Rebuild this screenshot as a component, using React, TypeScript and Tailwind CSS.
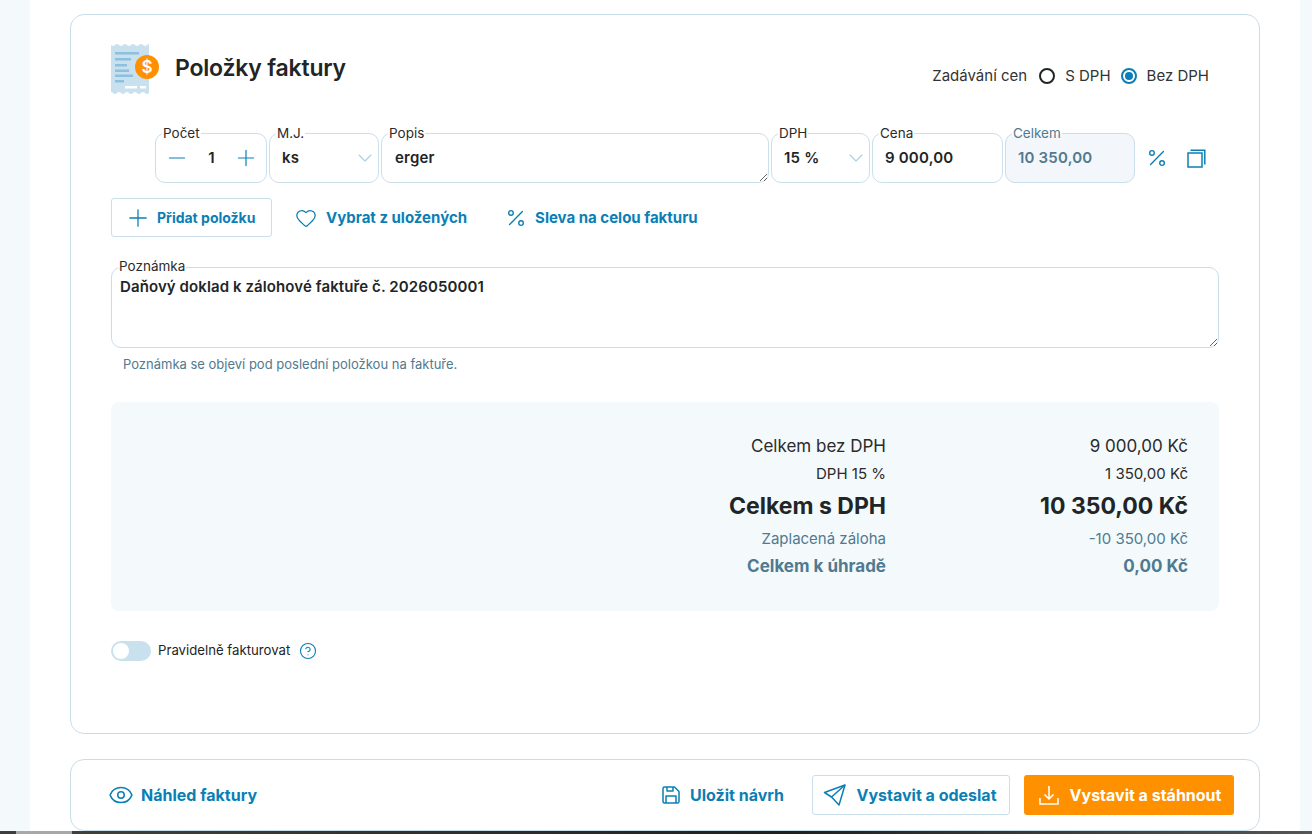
import React from 'react';
import { ChevronDown, CircleHelp, Eye, Heart, Minus, Percent, Plus } from 'lucide-react';

const ReceiptIcon: React.FC = () => (
  <svg width="50" height="52" viewBox="0 0 50 52" className="shrink-0">
    <path
      d="M0 1 q2 2 4 0 t4 0 t4 0 t4 0 t4 0 t4 0 t4 0 t4 0 t4 0 t2 0 V49 q-2 2 -4 0 t-4 0 t-4 0 t-4 0 t-4 0 t-4 0 t-4 0 t-4 0 t-4 0 t-2 0 Z"
      fill="#c9e0ee"
    />
    <g fill="#8dc0de">
      <rect x="4" y="8" width="24" height="2.5" />
      <rect x="4" y="14" width="16" height="2.5" />
      <rect x="4" y="20" width="12" height="2.5" />
      <rect x="4" y="25.5" width="14" height="2.5" />
      <rect x="4" y="30.5" width="18" height="2.5" />
      <rect x="4" y="36" width="9" height="2.5" />
    </g>
    <rect x="14" y="42" width="12" height="2.5" fill="#fff" />
    <rect x="29" y="42" width="6" height="2.5" fill="#fff" />
    <circle cx="36" cy="23" r="12" fill="#ff9100" />
    <text x="36" y="29" textAnchor="middle" fontSize="17" fontWeight="600" fontFamily="Inter, sans-serif" fill="#fff">$</text>
  </svg>
);

const PercentIcon: React.FC = () => (
  <Percent size={22} strokeWidth={1.5} className="text-[#0b7fb5]" />
);

const Field: React.FC<{
  label: string;
  width: string;
  muted?: boolean;
  children: React.ReactNode;
}> = ({ label, width, muted, children }) => (
  <div
    className={`relative h-[50px] rounded-[10px] border border-[#c9dfeb] flex items-center ${width} ${muted ? 'bg-[#f3f6fa]' : 'bg-white'}`}
  >
    <span
      className={`absolute left-[6px] -top-[10px] px-[1px] text-[13.5px] font-normal tracking-normal leading-[18px] bg-gradient-to-b from-white from-60% to-transparent to-60% ${muted ? 'text-[#4f7a90]' : 'text-[#2b2b2b]'}`}
    >
      {label}
    </span>
    {children}
  </div>
);

const SummaryRow: React.FC<{ label: string; value: string; className: string }> = ({ label, value, className }) => (
  <div className={`flex justify-end ${className}`}>
    <span>{label}</span>
    <span className="w-[302px] text-right">{value}</span>
  </div>
);

const App: React.FC = () => {
  return (
    <div className="h-[834px] w-[1312px] overflow-hidden flex flex-col bg-[#f4f9fc] font-['Inter',sans-serif] text-[#222526]">
      <div className="h-[831px] shrink-0 ml-[30px] mr-[12px] bg-white pl-[40px] pr-[40px] pt-[14px]">
        <section className="h-[720px] w-[1190px] rounded-[14px] border border-[#c9dde9] pl-[40px] pr-[40px] pt-[29px]">
          <div className="flex justify-between h-[52px]">
            <div className="flex items-start gap-[14px]">
              <ReceiptIcon />
              <h2 className="mt-[9px] text-[23px] leading-[30px] font-semibold tracking-[-0.2px]">Položky faktury</h2>
            </div>
            <div className="flex items-center h-[20px] mt-[22px] text-[15px] text-[#333]">
              <span>Zadávání cen</span>
              <span className="ml-[12px] w-4 h-4 rounded-full border-2 border-[#222526]" />
              <span className="ml-[10px]">S DPH</span>
              <span className="ml-[10px] w-4 h-4 rounded-full border-2 border-[#0b7fb5] flex items-center justify-center">
                <span className="w-2 h-2 rounded-full bg-[#0b7fb5]" />
              </span>
              <span className="ml-[10px] mr-[10px]">Bez DPH</span>
            </div>
          </div>

          <div className="flex items-center gap-[2px] mt-[37px] pl-[44px] text-[15px] font-semibold tracking-[0.2px]">
            <Field label="Počet" width="w-[112px]">
              <div className="flex items-center justify-between w-full pl-[8px] pr-[7px]">
                <Minus size={26} strokeWidth={1.1} className="text-[#0b7fb5]" />
                <span>1</span>
                <Plus size={26} strokeWidth={1.1} className="text-[#0b7fb5]" />
              </div>
            </Field>
            <Field label="M.J." width="w-[110px]">
              <div className="flex items-center justify-between w-full pl-[12px] pr-[1px]">
                <span>ks</span>
                <ChevronDown size={24} strokeWidth={1.1} className="text-[#a9cfe4]" />
              </div>
            </Field>
            <Field label="Popis" width="w-[388px]">
              <textarea
                readOnly
                defaultValue="erger"
                className="w-full h-full rounded-[10px] px-[13px] pt-[13px] text-[15px] font-semibold outline-none resize"
              />
            </Field>
            <Field label="DPH" width="w-[99px]">
              <div className="flex items-center justify-between w-full pl-[12px] pr-[1px]">
                <span>15 %</span>
                <ChevronDown size={24} strokeWidth={1.1} className="text-[#a9cfe4]" />
              </div>
            </Field>
            <Field label="Cena" width="w-[131px]">
              <span className="pl-[12px]">9 000,00</span>
            </Field>
            <Field label="Celkem" width="w-[130px]" muted>
              <span className="pl-[12px] text-[#4f7a90]">10 350,00</span>
            </Field>
            <div className="ml-[9px]">
              <PercentIcon />
            </div>
            <svg width="19" height="19" viewBox="0 0 19 19" fill="none" stroke="#0b7fb5" strokeWidth="1.5" className="ml-[17px]">
              <rect x="1" y="4" width="14" height="14" />
              <path d="M3.5 1.2H17.8V15.5" />
            </svg>
          </div>

          <div className="flex items-center mt-[15px] text-[15px] font-bold text-[#0b7fb5]">
            <button className="w-[161px] h-[39px] rounded-[3px] border border-[#c9dfeb] flex items-center pl-[12px] gap-[5px] text-[14px]">
              <Plus size={28} strokeWidth={1.1} />
              Přidat položku
            </button>
            <button className="ml-[23px] mt-[1px] flex items-center gap-[9px]">
              <Heart size={22} strokeWidth={1.4} />
              Vybrat z uložených
            </button>
            <button className="ml-[38px] mt-[1px] flex items-center gap-[8px]">
              <PercentIcon />
              Sleva na celou fakturu
            </button>
          </div>

          <div className="relative mt-[30px] h-[81px]">
            <span className="absolute left-[7px] -top-[10px] px-[1px] text-[13.5px] leading-[18px] text-[#2b2b2b] bg-gradient-to-b from-white from-60% to-transparent to-60%">
              Poznámka
            </span>
            <textarea
              readOnly
              defaultValue="Daňový doklad k zálohové faktuře č. 2026050001"
              className="block w-full h-full rounded-[10px] border border-[#c9dde9] px-[8px] pt-[9px] text-[15px] leading-[20px] font-semibold tracking-[0.1px] outline-none resize"
            />
          </div>
          <p className="mt-[8px] pl-[12px] text-[13px] leading-[16px] text-[#4f7a90]">
            Poznámka se objeví pod poslední položkou na faktuře.
          </p>

          <div className="mt-[30px] h-[209px] rounded-[8px] bg-[#f4f9fc] pr-[31px] pt-[32px]">
            <SummaryRow label="Celkem bez DPH" value="9 000,00 Kč" className="text-[17px] leading-[24px] text-[#2b2b2b]" />
            <SummaryRow label="DPH 15 %" value="1 350,00 Kč" className="mt-[5px] text-[15px] leading-[22px] text-[#2b2b2b]" />
            <SummaryRow label="Celkem s DPH" value="10 350,00 Kč" className="mt-[5px] text-[23px] leading-[32px] font-bold text-[#222526]" />
            <SummaryRow label="Zaplacená záloha" value="-10 350,00 Kč" className="mt-[6px] text-[15px] leading-[22px] text-[#4f7a90]" />
            <SummaryRow label="Celkem k úhradě" value="0,00 Kč" className="mt-[4px] text-[17px] leading-[24px] font-bold text-[#4f7a90]" />
          </div>

          <div className="flex items-center mt-[30px] text-[13.2px] text-[#222526]">
            <span className="w-[40px] h-[20px] rounded-full bg-[#c9e0ee] p-[2px]">
              <span className="block w-4 h-4 rounded-full bg-white" />
            </span>
            <span className="ml-[7px]">Pravidelně fakturovat</span>
            <CircleHelp size={18} strokeWidth={1.5} className="ml-[9px] text-[#0b7fb5]" />
          </div>
        </section>

        <footer className="mt-[25px] h-[72px] w-[1190px] rounded-[14px] border border-[#c9dde9] flex items-center pl-[37px] pr-[25px] text-[16px] font-bold text-[#0b7fb5]">
          <Eye size={26} strokeWidth={1.4} />
          <span className="ml-[7px]">Náhled faktury</span>
          <div className="ml-auto flex items-center">
            <svg width="20" height="20" viewBox="0 0 20 20" fill="none" stroke="currentColor" strokeWidth="1.5" strokeLinejoin="round">
              <path d="M2 3.5a1.5 1.5 0 0 1 1.5-1.5h10l4.5 4.5v10a1.5 1.5 0 0 1-1.5 1.5h-13A1.5 1.5 0 0 1 2 16.5z" />
              <path d="M6 2v4h6V2M5 18v-7h10v7" />
            </svg>
            <span className="ml-[9px]">Uložit návrh</span>
            <button className="ml-[28px] w-[198px] h-[40px] pr-[2px] rounded-[3px] border border-[#c9dfeb] flex items-center justify-center gap-[9px]">
              <svg width="24" height="24" viewBox="0 0 24 24" fill="none" stroke="currentColor" strokeWidth="1.5" strokeLinejoin="round">
                <path d="M22 2 1.5 9.5 8.5 14 16 22z" />
                <path d="M22 2 8.5 14" />
              </svg>
              Vystavit a odeslat
            </button>
            <button className="ml-[14px] w-[210px] h-[40px] pl-[2px] rounded-[3px] bg-[#ff9100] text-white flex items-center justify-center gap-[11px]">
              <svg width="20" height="22" viewBox="0 0 20 22" fill="none" stroke="currentColor" strokeWidth="1.5">
                <path d="M10 2v13M5.5 10.5 10 15l4.5-4.5M1 14v6h18v-6" />
              </svg>
              Vystavit a stáhnout
            </button>
          </div>
        </footer>
      </div>
      <div className="flex-1 bg-[linear-gradient(90deg,#3a3d38_0,#3a3d38_16px,#a8a8a8_16px,#a8a8a8_72px,#3d4239_72px,#1e201d_60%,#555_100%)]" />
    </div>
  );
};

export default App;
